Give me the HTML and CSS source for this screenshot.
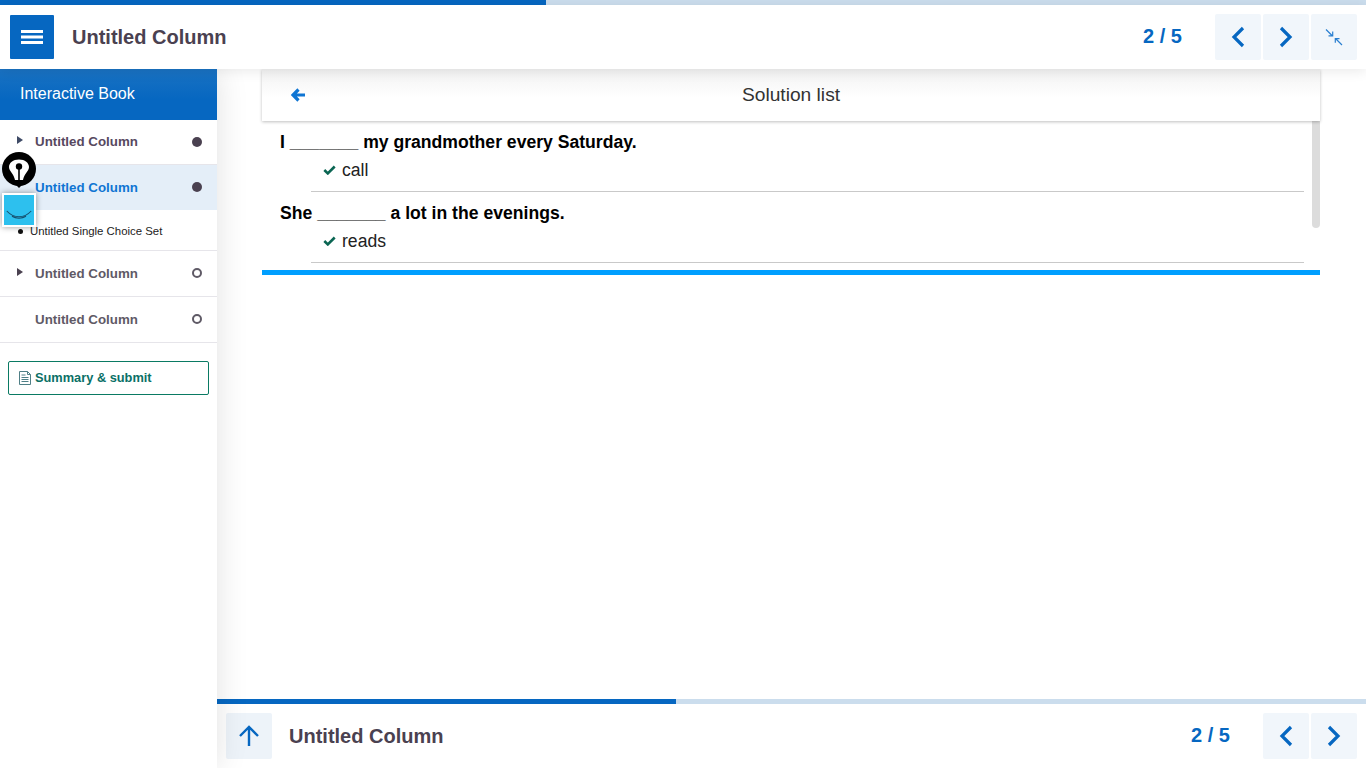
FILE: index.html
```html
<!DOCTYPE html>
<html lang="en">
<head>
<meta charset="utf-8">
<title>Interactive Book</title>
<link rel="stylesheet" href="styles.css">
</head>
<body>
<div class="app">
  <div class="progress top-progress"><div class="progress-fill fill-top"></div></div>
  <header class="topbar">
    <button class="menu-btn" aria-label="Menu">
      <svg width="22" height="14" viewBox="0 0 22 14"><path d="M0 0h22v3H0zM0 5.500h22v3H0zM0 11h22v3H0z" fill="#fff"/></svg>
    </button>
    <div class="title">Untitled Column</div>
    <div class="pager pager-top">2 / 5</div>
    <div class="btn-group">
      <button class="nav-btn" aria-label="Previous"><svg width="14" height="22" viewBox="0 0 14 22"><path d="M12 2 3 11l9 9" class="chev"/></svg></button>
      <button class="nav-btn" aria-label="Next"><svg width="14" height="22" viewBox="0 0 14 22"><path d="m2 2 9 9-9 9" class="chev"/></svg></button>
      <button class="nav-btn" aria-label="Exit fullscreen"><svg width="18" height="18" viewBox="0 0 18 18"><path d="M1 1.500 7.500 8M3.500 7.800h4.200V3.600M17 17l-6.500-6.500M14.500 10.600h-4.200v4.200" fill="none" stroke="#2a7fd0" stroke-width="1.200"/></svg></button>
    </div>
  </header>
  <div class="main">
    <aside class="sidebar">
      <div class="side-head">Interactive Book</div>
      <div class="side-row side-row-first">
        <span class="caret caret-visited"></span><span class="side-label label-visited">Untitled Column</span><span class="dot dot-full"></span>
      </div>
      <div class="side-row side-row-active">
        <span class="caret-space"></span><span class="side-label label-active">Untitled Column</span><span class="dot dot-full"></span>
      </div>
      <div class="side-sub"><span class="bullet"></span>Untitled Single Choice Set</div>
      <div class="side-row">
        <span class="caret"></span><span class="side-label">Untitled Column</span><span class="dot dot-empty"></span>
      </div>
      <div class="side-row">
        <span class="caret-space"></span><span class="side-label">Untitled Column</span><span class="dot dot-empty"></span>
      </div>
      <button class="summary-btn">
        <svg width="12" height="14" viewBox="0 0 12 14"><path d="M.5.5h8l3 3v10H.5zM8.500.5v3h3M2.500 4h4M2.500 6.500h7M2.500 8.500h7M2.500 10.500h7" fill="none" stroke="#4f7f86" stroke-width="1"/></svg>
        <span class="summary-text">Summary &amp; submit</span>
      </button>
    </aside>
    <section class="content">
      <div class="stage">
        <div class="panel">
          <div class="panel-head">
            <svg class="back" width="14" height="14" viewBox="0 0 14 14"><path d="M7.500 1.500 2 7l5.500 5.500M2 7h12" fill="none" stroke="#0f75d3" stroke-width="3.200"/></svg>
            <span>Solution list</span>
          </div>
          <div class="list">
            <div class="scroll-thumb"></div>
            <div class="question">I _______ my grandmother every Saturday.</div>
            <div class="answer">
              <svg width="13" height="10" viewBox="0 0 13 10"><path d="m1.300 5 3.500 3.400L11.700 1.500" fill="none" stroke="#0b6653" stroke-width="2.600"/></svg>
              <span>call</span>
            </div>
            <div class="question">She _______ a lot in the evenings.</div>
            <div class="answer">
              <svg width="13" height="10" viewBox="0 0 13 10"><path d="m1.300 5 3.500 3.400L11.700 1.500" fill="none" stroke="#0b6653" stroke-width="2.600"/></svg>
              <span>reads</span>
            </div>
          </div>
          <div class="panel-rule"></div>
        </div>
      </div>
      <footer class="bottom">
        <div class="progress"><div class="progress-fill fill-bottom"></div></div>
        <div class="bottom-bar">
          <button class="nav-btn nav-btn-up" aria-label="Top"><svg width="22" height="22" viewBox="0 0 22 22"><path d="M11 21V2M2 11l9-9 9 9" fill="none" stroke="#0667c1" stroke-width="2.400"/></svg></button>
          <div class="title title-bottom">Untitled Column</div>
          <div class="pager pager-bottom">2 / 5</div>
          <div class="btn-group">
            <button class="nav-btn" aria-label="Previous"><svg width="14" height="22" viewBox="0 0 14 22"><path d="M12 2 3 11l9 9" class="chev"/></svg></button>
            <button class="nav-btn" aria-label="Next"><svg width="14" height="22" viewBox="0 0 14 22"><path d="m2 2 9 9-9 9" class="chev"/></svg></button>
          </div>
        </div>
      </footer>
    </section>
  </div>
</div>
<div class="pen-widget">
  <svg width="36" height="40" viewBox="0 0 36 40"><circle cx="18" cy="17" r="17" fill="#000"/><path d="M15 33h6l-3 3z" fill="#000"/><path d="M18 7.500C12 7.500 8 11 8 15c0 4 5 7 6 13h8c1-6 6-9 6-13 0-4-4-7.500-10-7.500z" fill="#fff"/><circle cx="18" cy="14.500" r="3.200" fill="#000"/><path d="M17.200 16h1.600v12h-1.600z" fill="#000"/></svg>
</div>
<div class="smile-widget">
  <svg width="26" height="10" viewBox="0 0 26 10"><path d="M.8 1C4.500 5 9 6.800 13 6.800S21.500 5 25.200 1M6 6.300C10 8.800 16 8.800 20 6.300" fill="none" stroke="#16506e" stroke-width="1.100"/></svg>
</div>
</body>
</html>
```
FILE: styles.css
```css
* { box-sizing: border-box; }
html, body { margin: 0; height: 100%; overflow: hidden; }
body { font-family: "Liberation Sans", Arial, sans-serif; background: #fff; color: #000; position: relative; }
button { border: 0; padding: 0; font-family: inherit; cursor: pointer; }

.app { width: 1366px; height: 768px; display: flex; flex-direction: column; }

.progress { height: 5px; background: #cbdded; flex: none; }
.progress-fill { height: 100%; background: #0667c1; }
.fill-top { width: 546px; }
.fill-bottom { width: 459px; }

.topbar {
  height: 64px; flex: none; display: flex; align-items: center;
  padding: 0 9px 0 10px; background: #fff; position: relative; z-index: 3;
  box-shadow: 0 2px 12px rgba(0,0,0,.09);
}
.menu-btn {
  width: 44px; height: 44px; background: #0667c1; border-radius: 1px;
  display: flex; align-items: center; justify-content: center;
}
.title { font-size: 20px; font-weight: 700; color: #4a4150; margin-left: 18px; flex: 1; }
.pager { font-size: 20px; font-weight: 700; color: #0667c1; }
.pager-top { margin-right: 33px; padding-bottom: 1px; }
.pager-bottom { margin-right: 33px; padding-bottom: 1px; }
.btn-group { display: flex; gap: 2px; }
.nav-btn {
  width: 46px; height: 46px; background: #f1f6fb; border-radius: 2px;
  display: flex; align-items: center; justify-content: center; flex: none;
}
.nav-btn-up { background: #edf3f9; }
.chev { fill: none; stroke: #0667c1; stroke-width: 3.200; }

.main { flex: 1; display: flex; min-height: 0; }

.sidebar { width: 217px; flex: none; background: #fff; position: relative; z-index: 2; box-shadow: 0 0 30px rgba(0,0,0,.12); }
.side-head {
  height: 51px; padding: 0 0 2px 20px; display: flex; align-items: center;
  background: linear-gradient(#1a72c2, #0667c1 60%); color: #fff; font-size: 16px;
}
.side-row {
  height: 46px; display: flex; align-items: center; padding: 0 15px 0 17px;
  border-bottom: 1px solid #e6e5ea;
}
.side-row-first { height: 45px; padding-bottom: 1px; }
.side-row-active { background: #e4eef8; height: 45px; border-bottom: 0; }
.caret { width: 0; height: 0; border-left: 6px solid #4a4150; border-top: 4.500px solid transparent; border-bottom: 4.500px solid transparent; margin-right: 12px; margin-top: -3px; flex: none; }
.caret-visited { border-left-color: #3e4a66; }
.caret-space { width: 18px; flex: none; }
.side-label { flex: 1; font-size: 13.330px; font-weight: 700; color: #5f5a66; }
.label-visited { color: #57495f; }
.label-active { color: #0f75d3; }
.dot { width: 10px; height: 10px; border-radius: 50%; flex: none; margin-bottom: 2px; }
.side-row-first .dot { margin-bottom: 0; }
.dot-full { background: #4a4150; }
.dot-empty { border: 2px solid #5f5a66; }
.side-sub {
  height: 41px; display: flex; align-items: center; padding: 2px 0 0 18px;
  font-size: 11.400px; color: #222; border-bottom: 1px solid #e6e5ea;
}
.bullet { width: 5px; height: 5px; background: #111; border-radius: 50%; margin-right: 7px; }
.summary-btn {
  display: flex; align-items: center; gap: 4px; width: 201px; height: 34px;
  margin: 18px 8px 0; padding: 0 0 1px 10px; background: #fff;
  border: 1px solid #0a7a63; border-radius: 2px;
  font-size: 12.800px; font-weight: 700; color: #0a7066;
}
.summary-text { margin-bottom: 1px; }

.content { flex: 1; display: flex; flex-direction: column; min-width: 0; }
.stage { flex: 1; padding: 0 46px 0 45px; min-height: 0; }
.panel { position: relative; }
.panel-head {
  height: 52px; display: flex; align-items: center; justify-content: center;
  position: relative; z-index: 1; font-size: 19.200px; color: #333;
  background: linear-gradient(#f2f2f2, #fff 55%);
  box-shadow: 0 1px 3px rgba(0,0,0,.25);
}
.back { position: absolute; left: 29px; top: 19px; }
.list { height: 149px; padding: 8px 16px 0 18px; position: relative; }
.scroll-thumb { position: absolute; top: 0; right: 0; width: 8px; height: 107px; background: #dcdcdc; border-radius: 0 0 4px 4px; }
.question { font-size: 17.600px; font-weight: 700; line-height: 24px; height: 24px; margin-top: 1px; }
.answer {
  margin: 0 0 9px 31px; height: 38px; padding: 4px 0 0 12px; font-size: 17.600px; line-height: 24px; color: #222;
  border-bottom: 1px solid #c9c9c9; display: flex; align-items: flex-start; gap: 6px;
}
.answer svg { margin-top: 7px; }
.panel-rule { height: 5px; background: #009fff; }

.bottom { height: 69px; flex: none; background: #fff; position: relative; z-index: 1; }
.bottom-bar { height: 64px; display: flex; align-items: center; padding: 0 9px; }
.title-bottom { margin-left: 17px; }

.pen-widget { position: absolute; left: 1px; top: 152px; width: 36px; height: 40px; z-index: 5; }
.pen-widget svg { display: block; }
.smile-widget {
  position: absolute; left: 2px; top: 193px; width: 34px; height: 34px; z-index: 5;
  background: #2dc0ee; border: 2px solid #fff; box-shadow: 0 0 6px rgba(0,0,0,.4);
  display: flex; align-items: flex-end; justify-content: center; padding-bottom: 5px;
}
```
